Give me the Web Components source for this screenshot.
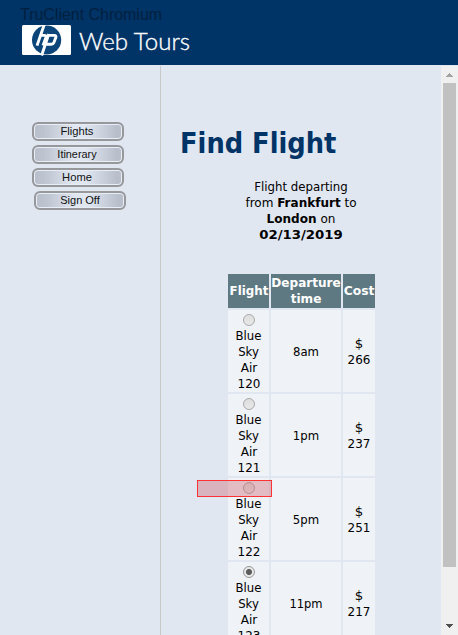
<!DOCTYPE html>
<html lang="en"><head><meta charset="utf-8"><title>Web Tours</title>
<style>html,body{margin:0;height:635px;overflow:hidden;background:#e0e7f1}</style></head><body>
<web-tours></web-tours>
<script>
const define=(name,html,init)=>customElements.define(name,class extends HTMLElement{
  constructor(){super();this.attachShadow({mode:'open'}).innerHTML=html;}
  connectedCallback(){if(init)init(this,this.shadowRoot);}
});

/* Stretches a line to the number of pixels in its "w" attribute; "left" keeps it at the left edge. */
define('fit-line','<style>:host{display:block;white-space:nowrap;width:max-content;margin-left:50%;transform:translateX(-50%)}:host([left]){margin-left:0;transform-origin:0 50%}</style><slot></slot>',el=>{
  const w=+el.getAttribute('w'),k=(w/el.offsetWidth).toFixed(4);
  el.style.transform=(el.hasAttribute('left')?'':'translateX(-50%) ')+'scaleX('+k+')';
});

define('tour-header',`<style>
:host{display:block;height:65px;background:#003366;position:relative;box-sizing:border-box;padding:25px 0 0 22px}
.brand{display:flex}
svg{display:block}
.tag{position:absolute;left:20px;top:6px;font:16px/18px "Liberation Sans",Arial,sans-serif;color:#00203f}
</style>
<div class="brand"><svg width="175" height="32" viewBox="0 0 175 32">
<rect width="49" height="30" rx="1.5" fill="#fff"/>
<ellipse cx="24.6" cy="15" rx="14.6" ry="14.4" fill="#0b4579"/>
<g fill="none" stroke="#fff" stroke-width="2.9">
<path d="M22.3 -.5L15 20.6M17.8 10.4h4.6q2.2 0 1.5 2l-2.9 8.2"/>
<path d="M19.6 30.5L26.8 9M26.4 10.4h5.8q2.3 0 1.6 2l-1.9 5.1q-.6 1.7-2.6 1.7h-5"/>
</g>
<text x="57" y="25" fill="#fff" stroke="#fff" stroke-width=".35" font-family="Lato,sans-serif" font-weight="300" font-size="24" textLength="111" lengthAdjust="spacingAndGlyphs">Web Tours</text>
</svg></div><div class="tag"><fit-line left w="142.5">TruClient Chromium</fit-line></div>`);

define('nav-button',`<style>
:host{display:block;width:92px;height:19px;box-sizing:border-box;border:2px solid #96989c;border-radius:6px;
background:linear-gradient(90deg,#b8bfcb 0,#bdc4cf 12%,#e0e7f1 45%,#e0e7f1 58%,#b8bfcb 94%);
box-shadow:inset 0 0 0 1px #e8eef7;font:11px/15px "Liberation Sans",Arial,sans-serif;color:#111}
</style><slot></slot>`);

define('tour-nav',`<style>
:host{display:flex;flex-direction:column;gap:4px;width:161px;box-sizing:border-box;padding:56px 0 0 32px;border-right:1px solid #c8c8c8;margin-top:1px;flex:none}
nav-button:last-child{margin-left:2px}
fit-line{position:relative;left:-1.5px}
nav-button:last-child fit-line{left:0}
</style><nav-button><fit-line w="32.5">Flights</fit-line></nav-button><nav-button><fit-line w="39.5">Itinerary</fit-line></nav-button><nav-button><fit-line w="29.5">Home</fit-line></nav-button><nav-button><fit-line w="40">Sign Off</fit-line></nav-button>`);

define('flight-radio',`<style>
:host{display:block;height:17px;padding-top:3px;box-sizing:border-box}
i{display:block;width:12px;height:12px;box-sizing:border-box;margin:0 auto;border:1px solid #a9a9a9;border-radius:50%;background:linear-gradient(#dedede,#e8e8e8);position:relative;left:.5px}
:host([checked]) i{border-color:#999;background:radial-gradient(circle,#5c5c5c 0 2.7px,#e8e8e8 3.3px)}
</style><i></i>`);

define('flight-row',`<style>
:host{display:grid;grid-template-columns:41px 70px 32px;gap:2px;height:82px;line-height:16px}
div{background:#eff2f7;display:flex;flex-direction:column;justify-content:center;align-items:stretch;padding-top:2px;box-sizing:border-box}
.f{justify-content:flex-start;padding-top:1px}
</style><div class="f"></div><div class="t"></div><div class="c"></div>`,(el,r)=>{
  const [num,time,tw,cost]=el.getAttribute('data').split(',');
  r.querySelector('.f').innerHTML='<flight-radio'+(el.hasAttribute('checked')?' checked':'')+'></flight-radio><fit-line w="26">Blue</fit-line><fit-line w="21">Sky</fit-line><fit-line w="16.5">Air</fit-line><fit-line w="22.5">'+num+'</fit-line>';
  r.querySelector('.t').innerHTML='<fit-line w="'+tw+'">'+time+'</fit-line>';
  r.querySelector('.c').innerHTML='<fit-line w="8">$</fit-line><fit-line w="22.5">'+cost+'</fit-line>';
});

define('flight-table',`<style>
:host{display:flex;flex-direction:column;gap:2px;margin:31px 0 0 67px;width:147px;position:relative}
.h{display:grid;grid-template-columns:41px 70px 32px;gap:2px;height:34px;color:#fff;font-weight:bold;line-height:16px}
.h div{background:#5f7983;display:flex;flex-direction:column;justify-content:center}
.mark{position:absolute;left:-31px;top:206px;width:75px;height:17px;box-sizing:border-box;border:1px solid #f33;background:rgba(205,92,102,.36)}
</style><div class="h"><div><fit-line w="38.5">Flight</fit-line></div><div><fit-line w="69">Departure</fit-line><fit-line w="31">time</fit-line></div><div><fit-line w="30.5">Cost</fit-line></div></div>
<flight-row data="120,8am,26,266"></flight-row>
<flight-row data="121,1pm,26,237"></flight-row>
<flight-row data="122,5pm,26,251"></flight-row>
<flight-row data="123,11pm,33.5,217" checked></flight-row><div class="mark"></div>`);

define('flight-search',`<style>
:host{display:block;flex:1;padding:58px 0 0 0;font:13px/16px "DejaVu Sans Condensed","DejaVu Sans",sans-serif;font-stretch:condensed;color:#000}
h1{font-size:28.8px;line-height:40px;margin:0 0 0 19px;color:#003366}
.p{margin:16px 0 0 66px;width:148px}
</style><h1><fit-line left w="156">Find Flight</fit-line></h1>
<div class="p"><fit-line w="93.5">Flight departing</fit-line><fit-line w="111">from <b>Frankfurt</b> to</fit-line><fit-line w="69"><b>London</b> on</fit-line><fit-line w="84"><b>02/13/2019</b></fit-line></div>
<flight-table></flight-table>`);

define('scroll-track',`<style>
:host{display:flex;flex-direction:column;align-items:center;width:17px;height:569px;background:#f0f0f0;margin-top:1px}
.thumb{width:13px;height:484px;background:#c1c1c1}
svg{display:block;width:17px;height:17px}
.down{margin-top:auto}
</style><svg viewBox="0 0 17 17" shape-rendering="crispEdges"><path d="M5 11h7v-1h-1v-1h-1v-1h-1v-1h-1v1h-1v1h-1v1h-1z" fill="#a3a3a3"/></svg><div class="thumb"></div><svg class="down" viewBox="0 0 17 17" shape-rendering="crispEdges"><path d="M5 6h7v1h-1v1h-1v1h-1v1h-1v-1h-1v-1h-1v-1h-1z" fill="#505050"/></svg>`);

define('web-tours',`<style>:host{display:block;height:635px;overflow:hidden;background:#e0e7f1}.m{display:flex;height:570px}</style>
<tour-header></tour-header><div class="m"><tour-nav></tour-nav><flight-search></flight-search><scroll-track></scroll-track></div>`);
</script></body></html>
